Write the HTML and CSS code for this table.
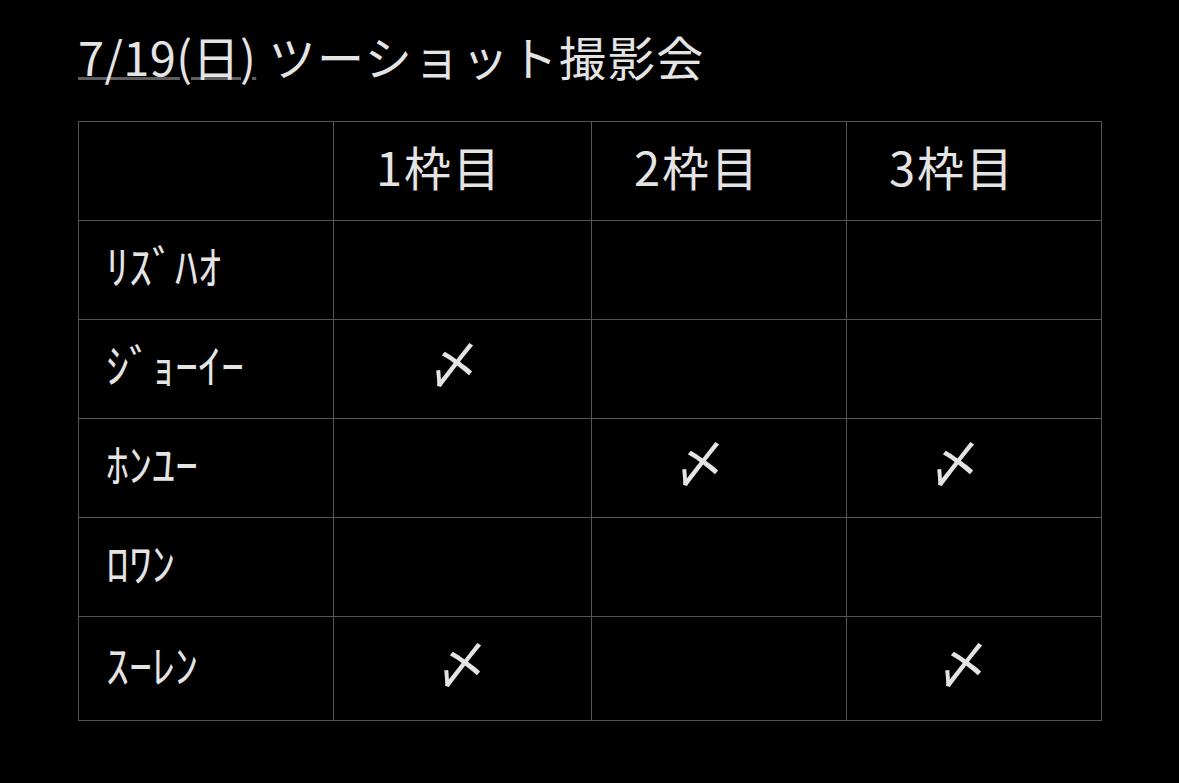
FILE: index.html
```html
<!DOCTYPE html>
<html lang="ja">
<head>
<meta charset="utf-8">
<link rel="stylesheet" href="styles.css">
</head>
<body>
<main class="page">
  <h1 class="title"><span class="date">7/19(日)</span> ツーショット撮影会</h1>
  <table class="grid">
    <colgroup>
      <col class="c-name">
      <col class="c-slot1">
      <col class="c-slot2">
      <col class="c-slot3">
    </colgroup>
    <tr class="head">
      <td></td>
      <td class="slot">1枠目</td>
      <td class="slot">2枠目</td>
      <td class="slot">3枠目</td>
    </tr>
    <tr>
      <td class="name">ﾘｽﾞﾊｵ</td>
      <td></td><td></td><td></td>
    </tr>
    <tr>
      <td class="name">ｼﾞｮｰｲｰ</td>
      <td class="mark m-a">〆</td><td></td><td></td>
    </tr>
    <tr>
      <td class="name">ﾎﾝﾕｰ</td>
      <td></td><td class="mark m-c">〆</td><td class="mark m-c">〆</td>
    </tr>
    <tr>
      <td class="name">ﾛﾜﾝ</td>
      <td></td><td></td><td></td>
    </tr>
    <tr class="last">
      <td class="name">ｽｰﾚﾝ</td>
      <td class="mark m-b">〆</td><td></td><td class="mark m-d">〆</td>
    </tr>
  </table>
</main>
</body>
</html>
```

FILE: styles.css
```css
html, body {
  margin: 0;
  padding: 0;
  background: #000;
}

body {
  color: #e4e4e4;
  font-family: "Noto Sans CJK JP", "Noto Sans", sans-serif;
}

.page {
  padding: 33px 0 0 78px;
}

.title {
  margin: 0;
  font-size: 47px;
  font-weight: 400;
  line-height: 46px;
  letter-spacing: 1.6px;
}

.date {
  letter-spacing: 0.4px;
  text-decoration: underline;
  text-decoration-color: #5e5e5e;
  text-decoration-thickness: 3px;
  text-underline-offset: 1px;
}

.grid {
  margin-top: 42px;
  border-collapse: collapse;
  table-layout: fixed;
  width: 1023px;
  font-size: 46px;
  line-height: 1;
}

.c-name { width: 255px; }
.c-slot1 { width: 258px; }
.c-slot2 { width: 255px; }
.c-slot3 { width: 255px; }

.grid tr {
  height: 99px;
}

.grid tr.last {
  height: 104px;
}

.grid td {
  border: 1px solid #555;
  padding: 0 0 12px 0;
  vertical-align: middle;
  white-space: nowrap;
}

.grid td.name {
  padding-left: 27px;
}

.grid td.slot {
  padding-left: 42px;
  font-size: 47px;
  letter-spacing: 2px;
}

.grid td.mark {
  font-size: 52px;
  padding-bottom: 14px;
}

.grid td.m-a { padding-left: 94px; }
.grid td.m-b { padding-left: 102px; }
.grid td.m-c { padding-left: 82px; }
.grid td.m-d { padding-left: 90px; }
```
